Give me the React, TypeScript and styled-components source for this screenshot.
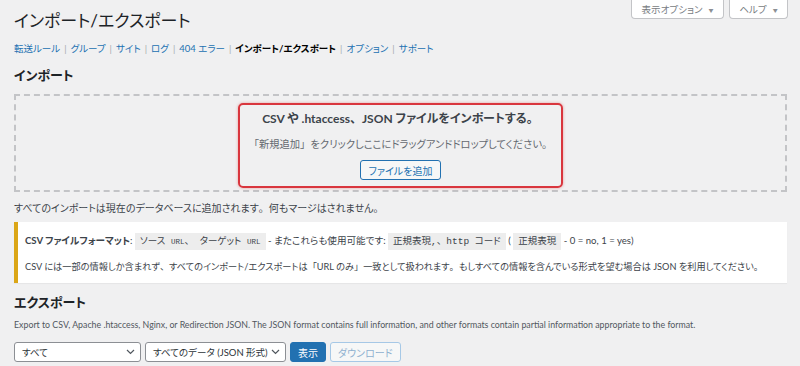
import React from "react";
import styled, { createGlobalStyle } from "styled-components";

const Global = createGlobalStyle`
  html, body { margin: 0; padding: 0; }
  body {
    background: #f0f0f1;
    font-family: "Lato", "Noto Sans CJK JP", sans-serif;
    font-feature-settings: "palt";
    color: #3c434a;
    width: 800px;
    height: 366px;
    overflow: hidden;
  }
`;

const Page = styled.div`
  padding: 0 13px 0 14px;
  display: flex;
  flex-direction: column;
`;

const Header = styled.div`
  display: flex;
  justify-content: space-between;
  align-items: flex-start;
  margin-right: -1px;
`;

const Title = styled.h1`
  margin: 9px 0 0;
  font-size: 17px;
  line-height: 23px;
  font-weight: 400;
  color: #1d2327;
`;

const MetaBar = styled.div`
  display: flex;
  gap: 5px;
`;

const MetaButton = styled.button<{ $width: number }>`
  width: ${(p) => p.$width}px;
  height: 19px;
  padding: 0;
  background: #fff;
  border: 1px solid #c3c4c7;
  border-top: none;
  border-radius: 0 0 4px 4px;
  font: inherit;
  font-size: 9.5px;
  color: #787c82;
  display: flex;
  align-items: center;
  justify-content: center;
  gap: 6px;
`;

const Caret = styled.span`
  font-size: 5px;
  color: #8c8f94;
`;

const Nav = styled.ul`
  margin: 10px 0 0;
  padding: 0;
  list-style: none;
  display: flex;
  font-size: 9.5px;
  line-height: 14px;
`;

const NavItem = styled.li<{ $current?: boolean }>`
  color: ${(p) => (p.$current ? "#000" : "#2271b1")};
  font-weight: ${(p) => (p.$current ? 700 : 400)};
`;

const Sep = styled.span`
  color: #a7aaad;
  padding: 0 4px;
  font-weight: 400;
`;

const SectionTitle = styled.h2<{ $top: number }>`
  margin: ${(p) => p.$top}px 0 0;
  font-size: 13px;
  line-height: 16px;
  font-weight: 700;
  color: #1d2327;
`;

const DropZone = styled.div`
  margin-top: 11px;
  height: 87px;
  border: 2px dashed #c3c4c7;
  display: flex;
  justify-content: center;
  align-items: flex-start;
  padding-top: 7px;
`;

const Highlight = styled.div`
  width: 321px;
  border: 2px solid #d9363e;
  border-radius: 5px;
  box-shadow: 0 0 3px rgba(214, 54, 56, 0.45);
  display: flex;
  flex-direction: column;
  align-items: center;
  padding: 7px 0 6px;
`;

const DropTitle = styled.div`
  font-size: 12px;
  line-height: 14px;
  font-weight: 700;
  color: #3c434a;
`;

const DropHint = styled.div`
  margin-top: 11px;
  font-size: 10.3px;
  line-height: 14px;
  color: #646970;
`;

const OutlineButton = styled.button`
  margin-top: 9px;
  height: 20px;
  padding: 0 8px;
  background: #f6f7f7;
  border: 1px solid #2271b1;
  border-radius: 3px;
  color: #2271b1;
  font: inherit;
  font-size: 10px;
`;

const Para = styled.p<{ $color?: string; $top: number; $size?: number }>`
  margin: ${(p) => p.$top}px 0 0;
  font-size: ${(p) => p.$size || 10}px;
  line-height: 14px;
  color: ${(p) => p.$color || "#3c434a"};
  white-space: nowrap;
`;

const Notice = styled.div`
  margin-top: 7px;
  background: #fff;
  border-left: 4px solid #dba617;
  box-shadow: 0 1px 1px rgba(0, 0, 0, 0.04);
  padding: 12px 8px 9px 7px;
  display: flex;
  flex-direction: column;
  gap: 11px;
`;

const NoticeLine = styled.div<{ $size: number }>`
  font-size: ${(p) => p.$size}px;
  line-height: 14px;
  color: #3c434a;
  white-space: nowrap;
`;

const Strong = styled.strong`
  font-weight: 700;
  color: #3c434a;
`;

const Code = styled.code`
  font-family: "Liberation Mono", "Noto Sans CJK JP", monospace;
  font-size: 9.5px;
  background: #ededed;
  padding: 3px 5px 3px;
  color: #3c434a;
`;

const Small = styled.span`
  font-size: 7.5px;
`;

const FullPunct = styled.span`
  font-feature-settings: normal;
`;

const Controls = styled.div`
  margin-top: 10px;
  display: flex;
  gap: 4px;
  align-items: center;
`;

const SelectBox = styled.div<{ $width: number }>`
  width: ${(p) => p.$width}px;
  height: 20px;
  box-sizing: border-box;
  background: #fff;
  border: 1px solid #8c8f94;
  border-radius: 3px;
  display: flex;
  align-items: center;
  justify-content: space-between;
  padding: 0 5px 0 7px;
  font-size: 9.5px;
  color: #2c3338;
  white-space: nowrap;
  overflow: hidden;
`;

const PrimaryButton = styled.button`
  height: 20px;
  padding: 0 7px;
  background: #2271b1;
  border: 1px solid #2271b1;
  border-radius: 3px;
  color: #fff;
  font: inherit;
  font-size: 10px;
`;

const DisabledButton = styled.button`
  height: 20px;
  padding: 0 7px;
  background: #f6f7f7;
  border: 1px solid #a6c8e6;
  border-radius: 3px;
  color: #8fb1cf;
  font: inherit;
  font-size: 10px;
`;

const Chevron = () => (
  <svg width="9" height="6" viewBox="0 0 9 6" fill="none">
    <path d="M1 1l3.5 3.5L8 1" stroke="#50575e" strokeWidth="1.2" />
  </svg>
);

// Keep Japanese punctuation full-width (as in the reference) while kana stay proportional.
const Jp = ({ children }: { children: string }) => (
  <>
    {children.split(/([、。「」])/).map((part, i) =>
      /^[、。「」]$/.test(part) ? <FullPunct key={i}>{part}</FullPunct> : part
    )}
  </>
);

const navItems = [
  "転送ルール",
  "グループ",
  "サイト",
  "ログ",
  "404 エラー",
  "インポート/エクスポート",
  "オプション",
  "サポート",
];

export default function App() {
  return (
    <>
      <Global />
      <Page>
        <Header>
          <Title>インポート/エクスポート</Title>
          <MetaBar>
            <MetaButton $width={93}>
              表示オプション <Caret>▼</Caret>
            </MetaButton>
            <MetaButton $width={59}>
              ヘルプ <Caret>▼</Caret>
            </MetaButton>
          </MetaBar>
        </Header>

        <Nav>
          {navItems.map((item, i) => (
            <NavItem key={item} $current={item === "インポート/エクスポート"}>
              {item}
              {i < navItems.length - 1 && <Sep>|</Sep>}
            </NavItem>
          ))}
        </Nav>

        <SectionTitle $top={11}>インポート</SectionTitle>

        <DropZone>
          <Highlight>
            <DropTitle>
              <Jp>CSV や .htaccess、JSON ファイルをインポートする。</Jp>
            </DropTitle>
            <DropHint>
              <Jp>「新規追加」をクリックしここにドラッグアンドドロップしてください。</Jp>
            </DropHint>
            <OutlineButton>ファイルを追加</OutlineButton>
          </Highlight>
        </DropZone>

        <Para $top={9}>
          <Jp>すべてのインポートは現在のデータベースに追加されます。何もマージはされません。</Jp>
        </Para>

        <Notice>
          <NoticeLine $size={9.6}>
            <Strong>CSV ファイルフォーマット</Strong>:{" "}
            <Code>
              ソース <Small>URL</Small>
              <FullPunct>、</FullPunct> ターゲット <Small>URL</Small>
            </Code>{" "}
            - またこれらも使用可能です: <Code>正規表現,<FullPunct>、</FullPunct>http コード</Code> ({" "}
            <Code>正規表現</Code> - 0 = no, 1 = yes)
          </NoticeLine>
          <NoticeLine $size={9.2}>
            <Jp>
              CSV には一部の情報しか含まれず、すべてのインポート/エクスポートは「URL のみ」一致として扱われます。もしすべての情報を含んでいる形式を望む場合は JSON を利用してください。
            </Jp>
          </NoticeLine>
        </Notice>

        <SectionTitle $top={11}>エクスポート</SectionTitle>

        <Para $top={8} $color="#50575e" $size={8.8}>
          Export to CSV, Apache .htaccess, Nginx, or Redirection JSON. The JSON format contains full information, and other formats contain partial information appropriate to the format.
        </Para>

        <Controls>
          <SelectBox $width={127}>
            すべて
            <Chevron />
          </SelectBox>
          <SelectBox $width={141}>
            すべてのデータ (JSON 形式)
            <Chevron />
          </SelectBox>
          <PrimaryButton>表示</PrimaryButton>
          <DisabledButton>ダウンロード</DisabledButton>
        </Controls>
      </Page>
    </>
  );
}
